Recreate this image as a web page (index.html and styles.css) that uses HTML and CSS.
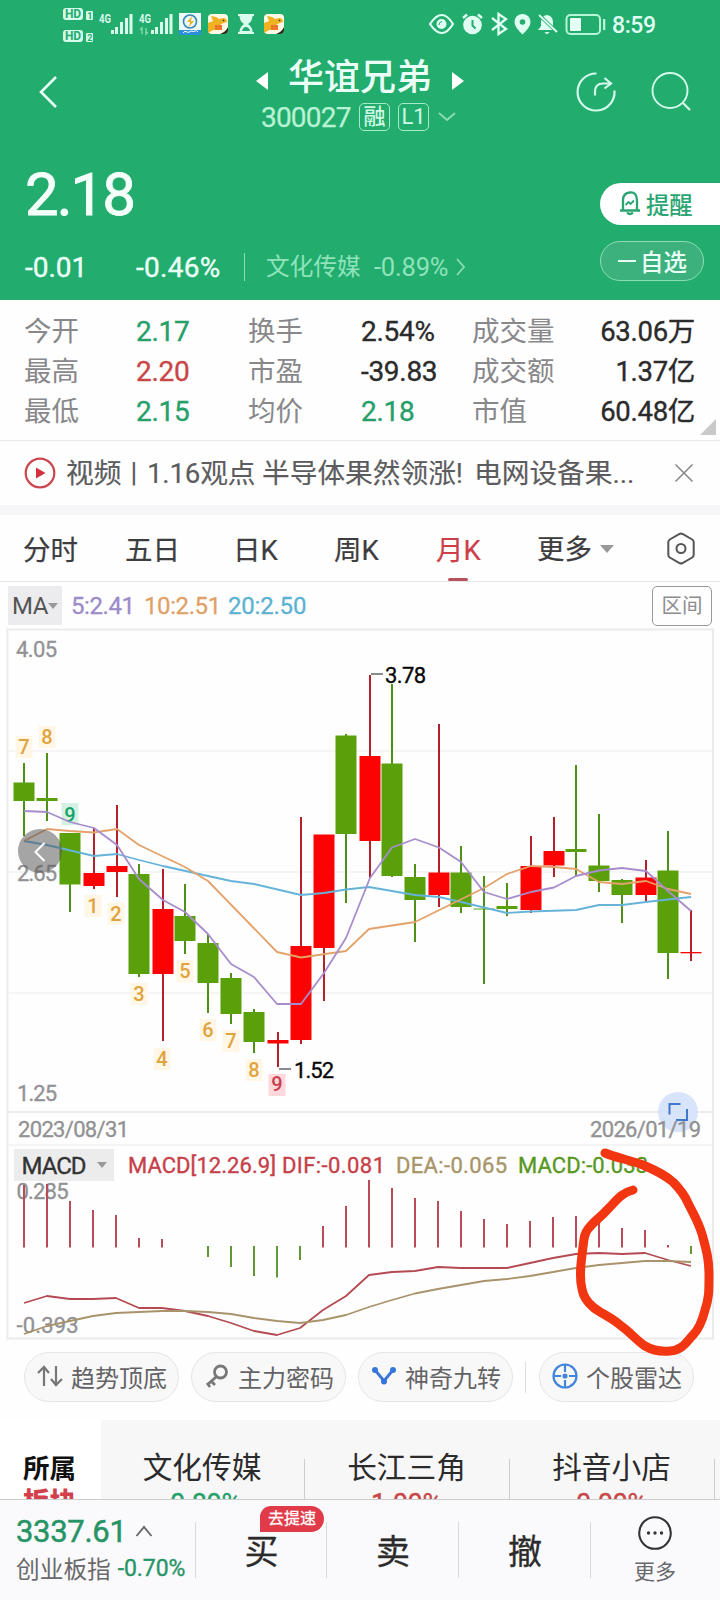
FILE: index.html
```html
<!DOCTYPE html>
<html lang="zh-CN">
<head>
<meta charset="utf-8">
<title>华谊兄弟 300027</title>
<link rel="stylesheet" href="styles.css">
</head>
<body>
<div class="app">
  <header class="head">
    <div class="status">
      <svg class="status-left" width="232" height="48" viewBox="60 0 232 48">
        <g fill="#d6fbea">
          <rect x="63" y="8" width="20" height="12" rx="3"/><rect x="63" y="30" width="20" height="12" rx="3"/>
          <rect x="86" y="11" width="7" height="9" rx="1"/><rect x="86" y="33" width="7" height="9" rx="1"/>
          <rect x="111" y="30" width="3" height="4"/><rect x="115" y="27" width="3" height="7"/><rect x="120" y="22" width="3" height="12"/><rect x="125" y="18" width="3" height="16"/><rect x="129.500" y="14" width="3" height="20"/>
          <rect x="151" y="30" width="3" height="4"/><rect x="155" y="27" width="3" height="7"/><rect x="160" y="22" width="3" height="12"/><rect x="165" y="18" width="3" height="16"/><rect x="169.500" y="14" width="3" height="20"/>
        </g>
        <g class="tiny-hd"><text x="65" y="18.300" textLength="16">HD</text><text x="65" y="40.300" textLength="16">HD</text></g>
        <g class="tiny-sim"><text x="87.300" y="19">1</text><text x="87.300" y="41">2</text></g>
        <g class="tiny-net"><text x="99" y="23" textLength="12" lengthAdjust="spacingAndGlyphs">4G</text><text x="139" y="23" textLength="12" lengthAdjust="spacingAndGlyphs">4G</text></g>
        <path d="M142 34v-6l-2 2M146 28v6l2-2" fill="none" stroke="#7fd6ab" stroke-width="1.500"/>
        <rect x="179" y="13" width="22" height="22" fill="#edf9fb"/><rect x="179" y="30" width="22" height="5" fill="#2b8fdc"/>
        <circle cx="190" cy="21.500" r="6.500" fill="none" stroke="#3585b5" stroke-width="1.600"/><path d="M192 16l-5 6h3l-1 5 5-6h-3z" fill="#e9b42a"/><path d="M183 33q2-3 4-1q2 1 4-1q2 1 4 0q2-1 3 1" stroke="#fff" fill="none"/>
        <g id="dog"><rect x="208" y="14" width="20" height="20" rx="4" fill="#fff8e4"/><path d="M208 23l5-2-2-5 5 1 3 2 4-1q4 0 4 4l-6 2-2 6h-6l-5 3z" fill="#eeb222"/><rect x="215" y="25" width="7" height="5" fill="#f0762a"/><path d="M228 27v3q0 4-4 4h-4q6-2 8-7z" fill="#252a20"/><circle cx="223.500" cy="20.500" r=".8" fill="#252a20"/></g>
        <path d="M238 14h16v2h-1.500q0 5-4.500 8q4.500 3 4.500 8H254v2h-16v-2h1.500q0-5 4.500-8q-4.500-3-4.500-8H238z" fill="#d9fcec"/><path d="M242 31q1-4 4-4t4 4z" fill="#22ac6e"/>
        <use href="#dog" x="56"/>
      </svg>
      <svg class="status-right" width="232" height="48" viewBox="425 0 232 48">
        <path d="M430 24q12-18 23 0q-11 18-23 0z" fill="none" stroke="#dffff2" stroke-width="2.200"/><circle cx="441.500" cy="24" r="5" fill="#dffff2"/><path d="M439 25q0-3 3-3.500" stroke="#22ac6e" fill="none"/>
        <circle cx="472.500" cy="25" r="9.300" fill="#dffff2"/><path d="M463 18l4-3.500M478 14.500l4 3.500" stroke="#dffff2" stroke-width="2.400"/><path d="M472.500 20v5.500l3 3" stroke="#22ac6e" stroke-width="2" fill="none"/>
        <path d="M492 18l14 11-7.500 5V14l7.500 5-14 11" fill="none" stroke="#dffff2" stroke-width="2.300"/>
        <path d="M522.500 14a8 8 0 0 1 8 8q0 5-8 12.500q-8-7.500-8-12.500a8 8 0 0 1 8-8z" fill="#dffff2"/><circle cx="522.500" cy="22" r="2.800" fill="#22ac6e"/>
        <path d="M538 30l3-4v-4q0-6 6-7q6 1 6 7v4l3 4zM544.500 32h5q-2.500 4-5 0z" fill="#dffff2"/><path d="M538 14l19 18" stroke="#22ac6e" stroke-width="3.500"/><path d="M539 15l18 17" stroke="#dffff2" stroke-width="1.800"/>
        <rect x="566.500" y="15" width="33.500" height="19" rx="4" fill="none" stroke="#b5f4d4" stroke-width="2"/><rect x="570" y="18" width="11" height="13" rx="1" fill="#e5fff4"/><rect x="603" y="19" width="2.300" height="11" fill="#b5f4d4"/>
        <text class="clock" x="612" y="33" textLength="44">8:59</text>
      </svg>
    </div>
    <div class="nav">
      <svg class="back" width="24" height="40" viewBox="36 72 24 40"><path d="M56 77L41 92l15 15" fill="none" stroke="#eafff6" stroke-width="2.600"/></svg>
      <div class="title">
        <div class="name"><i class="tri-l"></i><b>华谊兄弟</b><i class="tri-r"></i></div>
        <div class="code"><span class="num">300027</span><em>融</em><em class="level">L1</em>
          <svg width="18" height="12" viewBox="0 0 18 12"><path d="M1 2l8 7 8-7" fill="none" stroke="#8cddb5" stroke-width="1.800"/></svg></div>
      </div>
      <svg class="actions" width="120" height="46" viewBox="574 68 120 46" fill="none" stroke="#d3faea" stroke-width="2.200">
        <path d="M596.500 73.500a18.500 18.500 0 1 0 18 17"/><path d="M595 95.500v-3.500q0-8.500 8-8.500h7M604.500 78l6.500 5.500-6.500 5"/>
        <circle cx="670" cy="90.500" r="17.500" stroke-width="1.900"/><path d="M683 103l7 7"/>
      </svg>
    </div>
    <div class="quote">
      <div class="quote-main">
        <div class="price">2.18</div>
        <div class="change"><span class="diff">-0.01</span><span class="pct">-0.46%</span><i></i><span class="sector">文化传媒</span><span class="sector-pct">-0.89%</span>
          <svg width="12" height="20" viewBox="0 0 12 20"><path d="M2 2l7 8-7 8" fill="none" stroke="#8cddb5" stroke-width="1.800"/></svg></div>
      </div>
      <div class="quote-actions">
        <div class="alert"><svg width="22" height="25" viewBox="0 0 22 25" fill="none" stroke="#2aa572" stroke-width="2.300"><path d="M4 18.500V9.500q0-7.500 7-8t7 8v9M1 19.500h20"/><path d="M8 21.500q3 3 6 0"/><path d="M6.500 14l3-3 2 2 3.500-3.500" stroke-width="1.800"/></svg>提醒</div>
        <div class="fav"><i></i>自选</div>
      </div>
    </div>
  </header>

  <section class="stats">
    <span>今开</span><b class="g">2.17</b><span>换手</span><b>2.54%</b><span>成交量</span><b class="r-al">63.06万</b>
    <span>最高</span><b class="r">2.20</b><span>市盈</span><b>-39.83</b><span>成交额</span><b class="r-al">1.37亿</b>
    <span>最低</span><b class="g">2.15</b><span>均价</span><b class="g">2.18</b><span>市值</span><b class="r-al">60.48亿</b>
    <i class="corner"></i>
  </section>

  <section class="news">
    <svg width="32" height="32" viewBox="0 0 32 32"><circle cx="16" cy="16" r="14.300" fill="none" stroke="#c9464f" stroke-width="2.200"/><path d="M12 10.500v11l9.500-5.500z" fill="#d2313d"/></svg>
    <p><span class="kind">视频</span><span class="bar">|</span><span class="n116">1.16观点</span><span class="lead">半导体果然领涨!</span><span>电网设备果...</span></p>
    <svg width="20" height="20" viewBox="0 0 20 20"><path d="M1.500 1.500l17 17M18.500 1.500l-17 17" stroke="#888" stroke-width="1.600"/></svg>
  </section>

  <nav class="tabs">
    <span>分时</span><span>五日</span><span>日K</span><span>周K</span><span class="on">月K</span><span class="more">更多<i></i></span>
    <svg width="30" height="33" viewBox="0 0 30 33" fill="none" stroke="#555" stroke-width="2"><path d="M13.500 2q1.500-.8 3 0l9.700 5.500q1.500 1 1.500 2.700v12.600q0 1.700-1.500 2.700l-9.700 5.500q-1.500.8-3 0L3.800 25.500q-1.500-1-1.500-2.700V10.200q0-1.700 1.500-2.700z"/><circle cx="15" cy="16.500" r="4.500"/></svg>
  </nav>

  <section class="ma">
    <span class="ma-btn">MA<i></i></span><span class="m5">5:2.41</span><span class="m10">10:2.51</span><span class="m20">20:2.50</span><span class="range">区间</span>
  </section>

  <svg class="chart" id="chart" width="720" height="712" viewBox="0 628 720 712"></svg>

  <section class="tools">
    <span><svg width="26" height="24" viewBox="0 0 26 24" fill="none" stroke="#777" stroke-width="2.200"><path d="M7 22V3M1 9l6-6 5 6M19 2v19M14 15l5 6 6-6"/></svg>趋势顶底</span>
    <span><svg width="26" height="24" viewBox="0 0 26 24" fill="none" stroke="#777" stroke-width="2.800"><circle cx="16.500" cy="8" r="6"/><path d="M12 13l-9 8M7 17l4 4M3 19l3 4"/></svg>主力密码</span>
    <span><svg width="26" height="24" viewBox="0 0 26 24"><path d="M4 6l9 11 9-11" fill="none" stroke="#3576d9" stroke-width="2.800"/><circle cx="4" cy="6" r="3" fill="#3576d9"/><circle cx="22" cy="6" r="3" fill="#3576d9"/><circle cx="13" cy="17.500" r="3" fill="#3576d9"/></svg>神奇九转</span>
    <i></i>
    <span><svg width="26" height="26" viewBox="0 0 26 26" fill="none" stroke="#4285dc" stroke-width="2.200"><circle cx="13" cy="13" r="11.500"/><path d="M13 2v7M13 17v7M2 13h7M17 13h7"/><circle cx="13" cy="13" r="1.500" fill="#4285dc"/></svg>个股雷达</span>
  </section>

  <section class="boards">
    <div class="own">所属<b>板块</b></div>
    <div class="board">文化传媒<b class="g">-0.89%</b></div>
    <div class="board">长江三角<b class="r">1.00%</b></div>
    <div class="board">抖音小店<b class="r">0.00%</b></div>
  </section>

  <footer class="foot">
    <div class="index"><div class="idx-top"><b>3337.61</b><svg width="18" height="14" viewBox="0 0 18 14"><path d="M1.500 12L9 3l7.500 9" fill="none" stroke="#666" stroke-width="1.900"/></svg></div>
      <div class="idx-sub">创业板指<b>-0.70%</b></div></div>
    <div class="trade">买<em>去提速</em></div>
    <div class="trade">卖</div>
    <div class="trade">撤</div>
    <div class="etc"><svg width="36" height="36" viewBox="0 0 36 36"><circle cx="18" cy="18" r="15.800" fill="none" stroke="#333" stroke-width="2.100"/><g fill="#333"><circle cx="11.500" cy="18" r="1.700"/><circle cx="18" cy="18" r="1.700"/><circle cx="24.500" cy="18" r="1.700"/></g></svg><span>更多</span></div>
  </footer>
</div>
<script src="chart.js"></script>
</body>
</html>
```
FILE: styles.css
```css
* { box-sizing: border-box; }
body { margin: 0; background: #fff; font-family: Roboto, "Noto Sans CJK SC", sans-serif; color: #2b2b2b; }
i, em { font-style: normal; }
svg { display: block; flex: none; }
.app { width: 720px; height: 1600px; overflow: hidden; display: flex; flex-direction: column; background: #fefefe; }
.app > * { flex: none; }

.head { height: 300px; background: #22ac6e; color: #eafff6; }
.status { height: 48px; display: flex; justify-content: space-between; padding: 0 63px 0 60px; }
.tiny-hd { font-size: 12px; font-weight: 700; fill: #22ac6e; }
.tiny-sim { font-size: 9px; font-weight: 700; fill: #22ac6e; }
.tiny-net { font-size: 13px; font-weight: 700; fill: #d6fbea; }
.clock { font-size: 23px; font-weight: 500; fill: #dffff2; }

.nav { height: 92px; display: flex; justify-content: space-between; padding: 0 26px 0 36px; }
.back { margin-top: 24px; }
.title { width: 240px; margin-left: 84px; }
.name { height: 58px; display: flex; align-items: center; justify-content: center; gap: 20px; padding: 1px 0 0 2px; }
.name b { font-size: 36px; font-weight: 500; line-height: 50px; }
.tri-l, .tri-r { border: 9px solid transparent; margin-top: 6px; }
.tri-l { border-left: 0; border-right: 12px solid #fff; }
.tri-r { border-right: 0; border-left: 12px solid #fff; }
.code { height: 22px; display: flex; align-items: center; padding-left: 22px; color: #b9f2d5; }
.code .num { font-size: 28px; letter-spacing: -.8px; width: 98px; -webkit-text-stroke: .25px; }
.code em { width: 31px; height: 28px; border: 1.5px solid #a5eaca; border-radius: 5px; text-align: center; font-size: 22px; font-weight: 500; line-height: 25px; color: #cff9e5; margin-right: 8px; }
.code .level { font-weight: 400; }
.code svg { margin-left: 1px; }
.actions { margin-top: 20px; }

.quote { height: 160px; display: flex; justify-content: space-between; }
.quote-main { padding-left: 25px; }
.price { font-size: 60px; font-weight: 400; -webkit-text-stroke: .9px; line-height: 70px; margin-top: 20px; letter-spacing: -2px; color: #f4fffa; }
.change { height: 30px; display: flex; align-items: center; margin-top: 22px; font-size: 28px; white-space: nowrap; }
.diff { width: 111px; -webkit-text-stroke: .4px; }
.pct { width: 108px; letter-spacing: .3px; -webkit-text-stroke: .4px; }
.change i { width: 1px; height: 28px; background: #8cddb5; margin-right: 21px; }
.sector { width: 108px; font-size: 23.7px; color: #90e3bb; line-height: 28px; }
.sector-pct { width: 81px; font-size: 25.5px; letter-spacing: -.2px; color: #90e3bb; }
.quote-actions { width: 120px; padding-top: 43px; }
.alert { height: 42px; border-radius: 21px 0 0 21px; background: #fff; color: #2aa572; display: flex; align-items: center; gap: 5px; padding-left: 19px; font-size: 23.3px; font-weight: 500; padding-bottom: 1px; }
.fav { width: 104px; height: 40px; margin-top: 16px; border: 1.5px solid #8cddb5; border-radius: 20px; background: #3db17d; display: flex; align-items: center; gap: 4px; padding-left: 17px; font-size: 23.5px; font-weight: 500; }
.fav i { width: 18px; height: 2.5px; background: #eafff6; }

.stats { position: relative; height: 141px; padding: 12px 25px 0 24px; display: grid; grid-template-columns: 112px 112px 113px 111px 84px 1fr; grid-auto-rows: 40px; line-height: 40px; font-size: 27.5px; border-bottom: 1px solid #e9e9e9; white-space: nowrap; }
.stats span { color: #88888b; }
.stats b { font-weight: 400; font-size: 28px; letter-spacing: -.3px; -webkit-text-stroke: .35px; }
.stats .r-al { text-align: right; font-size: 27.5px; }
.g, .stats .g { color: #26a06a; }
.r, .stats .r { color: #c84747; }
.corner { position: absolute; right: 4px; bottom: 5px; width: 16px; height: 16px; background: #c9c9c9; clip-path: polygon(100% 0, 100% 100%, 0 100%); }

.news { height: 74px; border-bottom: 10px solid #f6f6f9; display: flex; align-items: center; padding: 0 26px 0 24px; font-size: 27.7px; color: #5c5c5e; -webkit-text-stroke: .15px; }
.news p { margin: 2px 0 0 10px; width: 609px; display: flex; white-space: nowrap; line-height: 40px; }
.news .kind { width: 55px; }
.news .bar { width: 26px; text-align: center; line-height: 38px; }
.news .n116 { letter-spacing: -.2px; width: 115px; }
.news .lead { width: 212px; }

.tabs { height: 67px; border-bottom: 1px solid #e6e6e6; display: grid; grid-template-columns: 102px 108px 101px 102px 101px 129px 30px; align-items: center; padding-left: 23px; font-size: 27.5px; color: #3d3d3f; -webkit-text-stroke: .2px; }
.tabs span { line-height: 71px; height: 66px; }
.tabs .on { position: relative; color: #cc404b; }
.tabs .on::after { content: ""; position: absolute; left: 12px; bottom: 0; width: 20px; height: 3px; border-radius: 2px; background: #b8515c; }
.tabs .more { display: flex; align-items: center; gap: 8px; padding-top: 2px; }
.more i, .ma-btn i { border: 7px solid transparent; border-top: 8px solid #999; border-bottom: 0; }

.ma { height: 46px; display: flex; align-items: center; padding: 1px 8px 0 8px; font-size: 24px; letter-spacing: -.4px; white-space: nowrap; }
.ma-btn { width: 54px; height: 39px; background: #ececee; color: #555; display: flex; align-items: center; padding-left: 4px; margin-right: 9px; gap: 0; }
.ma-btn i { border-width: 6px 5px 0; }
.m5, .m10, .m20 { -webkit-text-stroke: .3px; }
.m5 { width: 73px; color: #9c8bc9; }
.m10 { width: 84px; color: #dfa169; }
.m20 { color: #5cb2d3; letter-spacing: -.2px; }
.range { margin-left: auto; width: 60px; height: 40px; border: 1.5px solid #999; border-radius: 5px; color: #8c8c8e; font-size: 20.5px; line-height: 38px; text-align: center; letter-spacing: 0; }

.chart { position: relative; z-index: 2; overflow: visible; pointer-events: none; }
.chart .label { stroke-width: .35px; }
.chart .count { font-size: 20px; fill: #dfa43e; text-anchor: middle; }

.tools { height: 80px; padding: 12px 26px 18px 24px; display: flex; align-items: center; }
.tools span { width: 155px; height: 50px; border: 1.5px solid #e6e4e6; border-radius: 25px; background: #f9f8f9; color: #636365; font-size: 24px; display: flex; align-items: center; padding: 0 0 2px 12px; gap: 8px; margin-right: 12px; white-space: nowrap; }
.tools span:last-child { margin-right: 0; }
.tools i { width: 1px; height: 31px; background: #ddd; margin-right: 13px; }

.boards { height: 79px; display: grid; grid-template-columns: 101px 204px 205px 205px; background: linear-gradient(to right, #fff 101px, #f7f7f8 101px); overflow: hidden; }
.boards b { display: block; }
.own { padding: 31px 0 0 23px; font-size: 26.5px; line-height: 35px; font-weight: 700; color: #111; }
.own b { color: #d2404b; line-height: 32px; }
.board { position: relative; text-align: center; padding: 26px 2px 0 0; font-size: 29.7px; line-height: 44px; }
.board b { font-weight: 400; -webkit-text-stroke: .4px; font-size: 27px; line-height: 28px; letter-spacing: -.3px; }
.board::after { content: ""; position: absolute; right: 0; top: 39px; width: 1px; height: 40px; background: #ccc; }

.foot { height: 101px; border-top: 1.5px solid #ccc; background: #fafafc; display: grid; grid-template-columns: 196px 131px 132px 132px 129px; }
.index { padding: 12px 0 0 16px; white-space: nowrap; }
.foot > div:not(.etc) { position: relative; }
.foot > div:not(.etc)::after { content: ""; position: absolute; right: 0; top: 22px; height: 56px; width: 1px; background: #d9d9dc; }
.idx-top { height: 38px; display: flex; align-items: center; gap: 8px; }
.idx-top b { font-size: 31px; font-weight: 400; -webkit-text-stroke: .5px; letter-spacing: -.3px; color: #279466; }
.idx-sub { height: 36px; display: flex; align-items: center; gap: 7px; font-size: 23.7px; color: #69696b; }
.idx-sub b { font-size: 23px; font-weight: 400; -webkit-text-stroke: .35px; letter-spacing: -.1px; color: #279466; }
.trade { text-align: center; font-size: 34px; line-height: 104px; -webkit-text-stroke: .3px; }
.trade em { position: absolute; left: 64px; top: 6px; width: 64px; height: 26px; border-radius: 11px 13px 13px 0; background: #e13a49; color: #fff; font-size: 16px; line-height: 25px; }
.etc { display: flex; flex-direction: column; align-items: center; padding: 15px 1px 0 0; }
.etc span { font-size: 21px; line-height: 30px; margin-top: 6px; color: #69696b; }
```
FILE: chart.js
```js
const svg = document.getElementById('chart');
const NS = 'http://www.w3.org/2000/svg';
function add(tag, attrs, text) {
  const el = document.createElementNS(NS, tag);
  for (const k in attrs) el.setAttribute(k, attrs[k]);
  if (text) el.textContent = text;
  svg.appendChild(el);
}
function label(x, y, text, width, fill, size) {
  add('text', { x, y, fill, stroke: fill, class: 'label', textLength: width, 'font-size': size || 22 }, text);
}
function line(points, stroke) {
  add('polyline', { points, stroke, fill: 'none', 'stroke-width': 1.8, 'stroke-linejoin': 'round' });
}

// frame and grid
add('rect', { x: 7.5, y: 629.5, width: 705.5, height: 709, fill: '#fefefe', stroke: '#ebebed', 'stroke-width': 2 });
[751, 872, 993].forEach(y => add('path', { d: `M8 ${y}H712`, stroke: '#f2f2f3', 'stroke-width': 1.5 }));
add('path', { d: 'M8 1112H712', stroke: '#e6e6e8', 'stroke-width': 1.5 });
add('path', { d: 'M8 1145H712', stroke: '#f0f0f1', 'stroke-width': 1.5 });

// x, colour, wick top, wick bottom, body top, body bottom
const candles = [
  [24,'g',763,836,782.5,801],[47,'g',753,821,798,801],[70,'g',833,912,833,884.5],[94,'r',828,889,873,886],
  [117,'r',805,897,866,872],[139,'g',864,977,874,974],[163,'r',869,1041,909,974],[185,'g',884,954,916,941],
  [208,'g',934,1013,943,983],[231,'g',973,1024,978,1014],[254,'g',1009,1053,1012,1042],[278,'r',1032,1067,1040,1043.5],
  [301,'r',817,1044,946,1040],[324,'r',835,1001,834.5,948],[346,'g',734,903,735.5,834],[370,'r',675,878,756,841],
  [392,'g',684,877,763.5,876],[415,'g',864,942,877,900],[439,'r',724,907,872.5,895],[461,'g',846,913,872.5,907],
  [484,'g',876,984,908.5,909.5],[507,'g',883,916,906,909],[531,'r',836,913,866,910],[554,'r',817,877,851,865.5],
  [576,'g',765,876,849,852],[599,'g',814,892,865.5,881],[622,'g',879,923,880,895],[646,'r',860,901,877.5,895],
  [668,'g',831,979,870.5,953],[691,'r',910,961,952,953.3]
];
label(16, 657, '4.05', 41, '#929294');
label(17, 881, '2.65', 40, '#929294');
label(17, 1101, '1.25', 40, '#929294');
candles.forEach(([x, c, t, b, bt, bb]) => {
  add('rect', { x: x - 1, y: t, width: 2, height: b - t, fill: c === 'g' ? '#4f9016' : '#b3202a' });
  add('rect', { x: x - 10.5, y: bt, width: 21, height: bb - bt, fill: c === 'g' ? '#5aa00b' : '#fd0202' });
});

// sequential count marks
add('rect', { x: 61.500, y: 803, width: 17, height: 22, fill: '#d5f1e3' });
add('rect', { x: 268.500, y: 1074, width: 17, height: 22, fill: '#ffd8dc' });
[[24,754,7],[47,744,8],[93,913,1],[116,921,2],[139,1001,3],[162,1066,4],[185,978,5],[208,1037,6],[231,1048,7],[254,1077,8]].forEach(([x, y, n]) => {
  add('rect', { x: x - 8.5, y: y - 18, width: 17, height: 22, fill: '#fff6e6' });
  add('text', { x, y, class: 'count', 'font-weight': 500 }, String(n));
});
add('text', { x: 70, y: 822, class: 'count', style: 'fill:#16a06a', 'font-weight': 500 }, '9');
add('text', { x: 277, y: 1091, class: 'count', style: 'fill:#c93d50', 'font-weight': 500 }, '9');

// moving averages
line('24,841 47,845 94,856 117,854 139,860 163,866 208,876 231,881 254,884 301,895 324,893 346,889.5 369,887 415,895 439,897 461,902 507,913 531,911.5 576,910 599,905 622,905 646,902 668,899.5 691,897', '#66b3da');
line('24,841 47,829 70,831 94,832.5 117,829 139,845 185,867 208,881 277,952 301,957.5 346,951 369,929 415,922 484,888 507,874 531,866 554,867 576,869 599,882 622,884 646,881 668,889 691,894', '#e3a26a');
line('24,811 47,812 70,822 94,828 117,845 139,879 163,900 185,912 208,934 231,964 254,977 277,1004 301,1004 324,973 346,938 370,878 392,847.5 415,839 439,847.5 461,862 484,892 507,899 531,892 554,887.5 576,876 599,870.5 622,868 646,871 668,891 691,911', '#a78dcd');
add('path', { d: 'M371 674H383M279 1069H291', stroke: '#666', 'stroke-width': 1.5 });
label(385, 683, '3.78', 41, '#080808');
label(294, 1078, '1.52', 40, '#080808');

// pan button and expand button
add('circle', { cx: 40, cy: 851, r: 22, fill: '#555', 'fill-opacity': .53 });
add('path', { d: 'M44.500 843L35.500 852l9 9', fill: 'none', stroke: '#fff', 'stroke-width': 2 });
add('circle', { cx: 678, cy: 1112, r: 20, fill: '#d3e1f8', 'fill-opacity': .9 });
add('path', { d: 'M669.500 1114.500v-10.500h11M687 1109v11h-11', fill: 'none', stroke: '#3e79cd', 'stroke-width': 2 });
label(18, 1137, '2023/08/31', 111, '#929294');
label(590, 1137, '2026/01/19', 111, '#929294');

// indicator pane
add('rect', { x: 14, y: 1149, width: 100, height: 32, fill: '#ececed' });
label(21.5, 1174, 'MACD', 65, '#333', 24);
add('path', { d: 'M97 1162h10l-5 6z', fill: '#999' });
label(128, 1173, 'MACD[12.26.9]', 148, '#c6404a');
label(282, 1173, 'DIF:-0.081', 103, '#c6404a');
label(396, 1173, 'DEA:-0.065', 111, '#a89469');
label(518, 1173, 'MACD:-0.033', 130, '#57981f');
label(16.5, 1199, '0.285', 52, '#929294');
label(16.5, 1333, '-0.393', 62, '#929294');
const bars = [1185,1184,1201,1210,1215,1238,1239,1247,1257,1267,1276,1277.5,1260,1226,1206,1180,1188,1198,1201,1211,1219,1224,1221,1217,1216,1222,1228,1230,1245,1254];
bars.forEach((v, i) => {
  const x = 24 + i * 23;
  if (v !== 1247) add('path', { d: `M${x} ${v}V${v < 1247 ? 1247.5 : 1246}`, stroke: v < 1247 ? '#b94c59' : '#639734', 'stroke-width': 2 });
});
line('24,1303 47,1296 70,1299 93,1299 116,1298 139,1308 162,1308 185,1311 208,1316 231,1323 254,1331 277,1335 300,1328 323,1310 346,1296 369,1275 392,1272 415,1271 438,1267 461,1268 507,1268 530,1263 553,1258 576,1254 599,1253 622,1254 645,1253 668,1260 691,1266', '#b44b52');
line('24,1334 47,1326 70,1321 93,1316 116,1313 162,1311 185,1311 208,1312 231,1314 254,1318 277,1321 300,1323 323,1320 346,1315 369,1307 392,1300 415,1293.500 438,1289 461,1285 484,1281 507,1279 530,1276 553,1272 576,1268 599,1265 622,1263 645,1261 668,1261 691,1262', '#a8936b');

// hand-drawn mark
add('path', { d: 'M605 1153C617 1158 630 1160 643 1165C655 1170 664 1174 673 1182C681 1190 685 1196 688 1203C695 1217 698 1221 702 1234C707 1252 709 1260 709 1275C709 1292 709 1298 705 1310C702 1322 699 1329 693 1335C687 1341 683 1350 670 1351C660 1352 652 1350 645 1346C636 1340 629 1331 620 1325C611 1317 600 1313 593 1307C587 1302 583 1295 582 1289C579 1277 581 1262 583 1247C584 1239 584 1234 588 1229C595 1220 601 1217 607 1210C617 1200 621 1193 633 1190', fill: 'none', stroke: '#f13611', 'stroke-width': 9, 'stroke-linecap': 'round', 'stroke-linejoin': 'round' });
```
